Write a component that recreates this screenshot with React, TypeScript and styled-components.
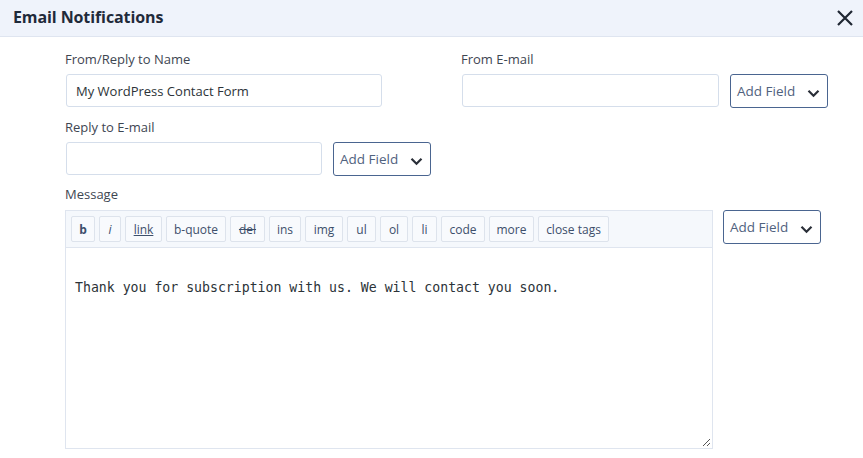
import React from "react";
import styled, { createGlobalStyle } from "styled-components";

const Global = createGlobalStyle`
  html, body { margin: 0; padding: 0; background: #fff; }
  body { font-family: "Open Sans", "Noto Sans", sans-serif; color: #3c434a; }
  * { box-sizing: border-box; }
`;

const Page = styled.div`
  width: 863px;
  height: 458px;
  background: #fff;
  overflow: hidden;
`;

const Header = styled.div`
  height: 37px;
  background: #eff3fb;
  border-bottom: 1px solid #dfe5f0;
  display: flex;
  align-items: center;
  justify-content: space-between;
  padding: 0 8px 3px 13px;
`;

const Title = styled.h2`
  margin: 0;
  font-size: 16px;
  font-weight: 700;
  color: #1f2a3a;
  letter-spacing: -0.1px;
`;

const CloseBtn = styled.button`
  border: 0;
  background: none;
  padding: 0;
  width: 20px;
  height: 20px;
  display: flex;
  align-items: center;
  justify-content: center;
  margin-top: 2px;
`;

const Body = styled.div`
  padding: 13px 0 0 65px;
  display: flex;
  flex-direction: column;
`;

const Row = styled.div<{ $mt?: number }>`
  display: flex;
  gap: 30px;
  margin-top: ${(p) => p.$mt ?? 0}px;
`;

const Field = styled.div<{ $w?: number }>`
  display: flex;
  flex-direction: column;
  width: ${(p) => (p.$w ? `${p.$w}px` : "auto")};
`;

const Label = styled.label`
  font-size: 13px;
  color: #3e4652;
  line-height: 18px;
  margin-bottom: 6px;
`;

const Line = styled.div<{ $gap?: number; $mt?: number }>`
  display: flex;
  align-items: flex-start;
  gap: ${(p) => p.$gap ?? 11}px;
  margin-top: ${(p) => p.$mt ?? 0}px;
`;

const Input = styled.input<{ $w: number }>`
  width: ${(p) => p.$w}px;
  height: 33px;
  margin-left: 1px;
  border: 1px solid #d5deeb;
  border-radius: 3px;
  padding: 0 9px;
  font-family: "Open Sans", "Noto Sans", sans-serif;
  font-size: 13px;
  color: #2c3338;
  background: #fff;
  outline: none;
`;

const AddField = styled.button`
  height: 34px;
  width: 98px;
  border: 1px solid #4a6590;
  border-radius: 3px;
  background: #fff;
  color: #50627e;
  font-family: "Open Sans", "Noto Sans", sans-serif;
  font-size: 13.5px;
  display: flex;
  align-items: center;
  justify-content: space-between;
  padding: 0 7px 0 6px;
  svg { margin-top: 4px; }
`;

const Editor = styled.div`
  width: 648px;
  height: 239px;
  border: 1px solid #dfe5ef;
  display: flex;
  flex-direction: column;
`;

const Toolbar = styled.div`
  height: 37px;
  background: #f5f8fc;
  border-bottom: 1px solid #dfe5ef;
  display: flex;
  align-items: center;
  gap: 4px;
  padding: 0 5px;
`;

const ToolBtn = styled.button<{ $w: number; $deco?: string; $bold?: boolean; $italic?: boolean }>`
  height: 26px;
  width: ${(p) => p.$w}px;
  flex: none;
  border: 1px solid #dde3ec;
  border-radius: 2px;
  background: #f8fafd;
  color: #3d4f6b;
  font-family: "Open Sans", "Noto Sans", sans-serif;
  font-size: 12px;
  font-weight: ${(p) => (p.$bold ? 700 : 400)};
  font-style: ${(p) => (p.$italic ? "italic" : "normal")};
  text-decoration: ${(p) => p.$deco ?? "none"};
  padding: 0;
  display: flex;
  align-items: center;
  justify-content: center;
`;

const TextArea = styled.div`
  flex: 1;
  position: relative;
  padding: 32px 9px;
  font-family: "DejaVu Sans Mono", "Liberation Mono", monospace;
  font-size: 13.2px;
  color: #2c3338;
  background: #fff;
`;

const Grip = styled.svg`
  position: absolute;
  right: 1px;
  bottom: 1px;
`;

const Chevron = () => (
  <svg width="13" height="9" viewBox="0 0 13 9">
    <path d="M1.5 1.8 L6.5 6.8 L11.5 1.8" fill="none" stroke="#2a2f38" strokeWidth="2.2" />
  </svg>
);

const tools: { t: string; w: number; deco?: string; bold?: boolean; italic?: boolean }[] = [
  { t: "b", w: 24, bold: true },
  { t: "i", w: 22, italic: true },
  { t: "link", w: 37, deco: "underline" },
  { t: "b-quote", w: 60 },
  { t: "del", w: 35, deco: "line-through" },
  { t: "ins", w: 32 },
  { t: "img", w: 38 },
  { t: "ul", w: 29 },
  { t: "ol", w: 28 },
  { t: "li", w: 25 },
  { t: "code", w: 44 },
  { t: "more", w: 45 },
  { t: "close tags", w: 71 },
];

export default function App() {
  return (
    <Page>
      <Global />
      <Header>
        <Title>Email Notifications</Title>
        <CloseBtn aria-label="close">
          <svg width="18" height="18" viewBox="0 0 18 18">
            <path d="M2 2 L16 16 M16 2 L2 16" stroke="#1f2733" strokeWidth="2.2" />
          </svg>
        </CloseBtn>
      </Header>
      <Body>
        <Row>
          <Field $w={366}>
            <Label>From/Reply to Name</Label>
            <Line>
              <Input $w={316} defaultValue="My WordPress Contact Form" />
            </Line>
          </Field>
          <Field>
            <Label>From E-mail</Label>
            <Line>
              <Input $w={257} />
              <AddField>
                Add Field <Chevron />
              </AddField>
            </Line>
          </Field>
        </Row>
        <Row $mt={10}>
          <Field>
            <Label>Reply to E-mail</Label>
            <Line $gap={11}>
              <Input $w={256} />
              <AddField>
                Add Field <Chevron />
              </AddField>
            </Line>
          </Field>
        </Row>
        <Row $mt={9}>
          <Field>
            <Label>Message</Label>
            <Line $gap={10} $mt={1}>
              <Editor>
                <Toolbar>
                  {tools.map((b) => (
                    <ToolBtn key={b.t} $w={b.w} $deco={b.deco} $bold={b.bold} $italic={b.italic}>
                      {b.t}
                    </ToolBtn>
                  ))}
                </Toolbar>
                <TextArea>
                  Thank you for subscription with us. We will contact you soon.
                  <Grip width="11" height="11" viewBox="0 0 11 11">
                    <path d="M10 3 L3 10 M10 7 L7 10" stroke="#555" strokeWidth="1" />
                  </Grip>
                </TextArea>
              </Editor>
              <AddField>
                Add Field <Chevron />
              </AddField>
            </Line>
          </Field>
        </Row>
      </Body>
    </Page>
  );
}
